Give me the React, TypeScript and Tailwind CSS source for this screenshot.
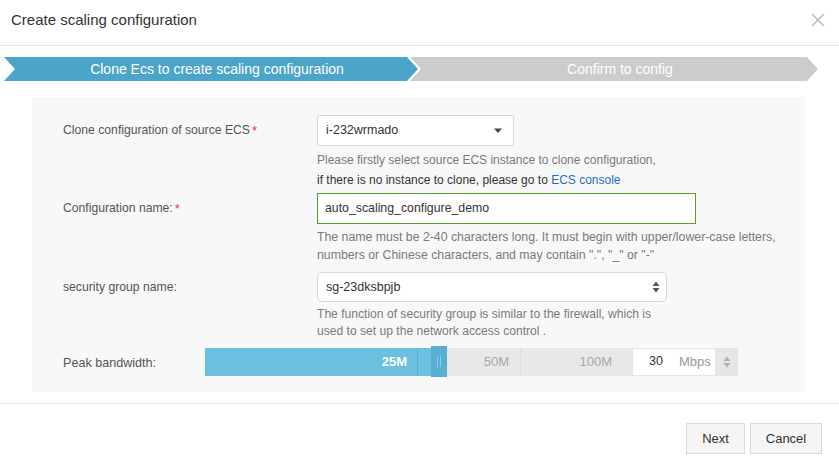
import React from "react";

const FONT = "font-['Liberation_Sans','Helvetica_Neue',Arial,sans-serif]";

function Caret() {
  return (
    <svg width="10" height="6" viewBox="0 0 10 6" className="text-[#444]">
      <path d="M1 0.5h8L5 5z" fill="currentColor" />
    </svg>
  );
}

function UpDown({ className }: { className?: string }) {
  return (
    <svg width="8" height="12" viewBox="0 0 8 12" className={className}>
      <path d="M4 0.5L7.5 5h-7z" fill="currentColor" />
      <path d="M4 11.5L0.5 7h7z" fill="currentColor" />
    </svg>
  );
}

function Row({ label, required, children }: { label: string; required?: boolean; children: React.ReactNode }) {
  return (
    <div className="flex">
      <div className="w-[285px] shrink-0 pl-[31px] h-[31px] flex items-center text-[12.2px] text-[#555]">
        {label}
        {required && <span className="text-[#e4393c] ml-[2px] text-[13px]">*</span>}
      </div>
      <div className="flex-1">{children}</div>
    </div>
  );
}

export default function App() {
  return (
    <div className={`${FONT} w-[839px] h-[473px] bg-white text-[#333] overflow-hidden`}>
      {/* header */}
      <div className="h-[46px] border-b border-[#e5e5e5] flex items-center justify-between pl-[11px] pr-[14px]">
        <span className="text-[15px] text-[#333] -mt-[4px]">Create scaling configuration</span>
        <svg width="14" height="14" viewBox="0 0 14 14" className="text-[#bdbdbd] -mt-[5px]">
          <path d="M1 1l12 12M13 1L1 13" stroke="currentColor" strokeWidth="1.6" />
        </svg>
      </div>

      {/* steps */}
      <div className="flex mt-[11px] ml-[4px] h-[24px]">
        <div className="relative z-10 w-[414px] h-full bg-[#4aa5c9] flex items-center justify-center pl-[12px] text-[14px] text-white [clip-path:polygon(0_0,calc(100%-11px)_0,100%_50%,calc(100%-11px)_100%,0_100%,11px_50%)]">
          Clone Ecs to create scaling configuration
        </div>
        <div className="w-[408px] -ml-[8px] h-full bg-[#cccccc] flex items-center justify-center pl-[12px] text-[14px] text-white [clip-path:polygon(0_0,calc(100%-11px)_0,100%_50%,calc(100%-11px)_100%,0_100%,11px_50%)]">
          Confirm to config
        </div>
      </div>

      {/* form panel */}
      <div className="mt-[16px] ml-[32px] w-[773px] bg-[#f8f8f8] pt-[18px] pb-[15px]">
        <Row label="Clone configuration of source ECS" required>
          <div className="w-[197px] h-[31px] bg-white border border-[#d9d9d9] rounded-[2px] flex items-center justify-between pl-[8px] pr-[10px] text-[12.5px] text-[#333]">
            <span>i-232wrmado</span>
            <Caret />
          </div>
          <div className="mt-[4px] text-[12px] leading-[20px]">
            <div className="text-[#7a7a7a]">Please firstly select source ECS instance to clone configuration,</div>
            <div className="text-[#333]">
              if there is no instance to clone, please go to <span className="text-[#1e6fc0]">ECS console</span>
            </div>
          </div>
        </Row>

        <div className="mt-[3px]">
          <Row label="Configuration name:" required>
            <div className="w-[379px] h-[31px] bg-white border border-[#5c9a2a] flex items-center px-[7px] text-[12.3px] text-[#333]">
              auto_scaling_configure_demo
            </div>
            <div className="mt-[4px] text-[12.3px] leading-[18px] text-[#7a7a7a]">
              <div>The name must be 2-40 characters long. It must begin with upper/lower-case letters,</div>
              <div>numbers or Chinese characters, and may contain ".", "_" or "-"</div>
            </div>
          </Row>
        </div>

        <div className="mt-[8px]">
          <Row label="security group name:">
            <div className="w-[350px] h-[30px] bg-white border border-[#d9d9d9] rounded-[5px] flex items-center justify-between pl-[8px] pr-[6px] text-[12.5px] text-[#333]">
              <span>sg-23dksbpjb</span>
              <UpDown className="text-[#555]" />
            </div>
            <div className="mt-[4px] text-[12.1px] leading-[17px] text-[#7a7a7a]">
              <div>The function of security group is similar to the firewall, which is</div>
              <div>used to set up the network access control .</div>
            </div>
          </Row>
        </div>

        {/* bandwidth slider */}
        <div className="mt-[6px] flex items-center">
          <div className="w-[173px] shrink-0 pl-[31px] pt-[4px] text-[12.6px] text-[#555]">Peak bandwidth:</div>
          <div className="flex items-center h-[31px]">
            <div className="w-[213px] h-[28px] bg-[#6bc0e0] border-r border-[#55aed3] flex items-center justify-end pr-[10px] text-[13px] font-bold text-white">
              25M
            </div>
            <div className="w-[13px] h-[28px] bg-[#6bc0e0]" />
            <div className="w-[16px] h-[31px] bg-[#59aed3] flex items-center justify-center gap-[2px]">
              <div className="w-px h-[11px] bg-[#8fcde8]" />
              <div className="w-px h-[11px] bg-[#8fcde8]" />
            </div>
            <div className="w-[74px] h-[28px] bg-[#e8e8e8] border-r border-[#dcdcdc] flex items-center justify-end pr-[11px] text-[13px] text-[#a8a8a8]">
              50M
            </div>
            <div className="w-[111px] h-[28px] bg-[#e8e8e8] flex items-center justify-end pr-[20px] text-[13px] text-[#a8a8a8]">
              100M
            </div>
            <div className="w-[84px] h-[28px] bg-white border border-[#e6e6e6] flex items-center">
              <span className="w-[30px] text-right text-[12.6px] text-[#333]">30</span>
              <span className="ml-[16px] text-[13px] text-[#9a9a9a]">Mbps</span>
            </div>
            <div className="w-[22px] h-[28px] bg-[#e6e6e6] flex items-center justify-center">
              <UpDown className="text-[#b0b0b0]" />
            </div>
          </div>
        </div>
      </div>

      {/* footer */}
      <div className="mt-[11px] border-t border-[#e5e5e5] flex justify-end gap-[5px] pr-[17px] pt-[19px]">
        <button className="w-[59px] h-[31px] bg-[#f5f5f5] border border-[#dadada] text-[13px] text-[#333]">Next</button>
        <button className="w-[72px] h-[31px] bg-[#f5f5f5] border border-[#dadada] text-[13px] text-[#333]">Cancel</button>
      </div>
    </div>
  );
}
